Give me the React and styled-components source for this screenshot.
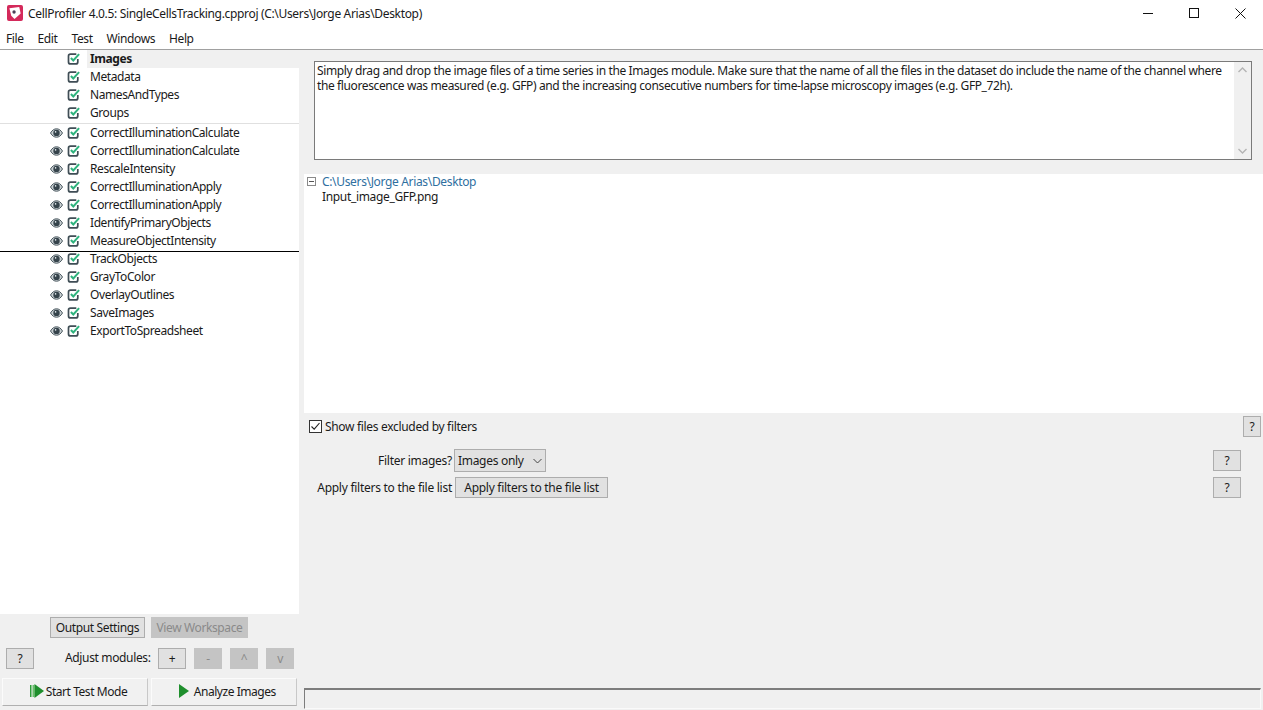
import React from 'react';
import styled, {createGlobalStyle} from 'styled-components';

const GlobalStyle = createGlobalStyle`
    html, body {
        margin: 0;
        padding: 0;
        background: #f0f0f0;
        overflow: hidden;
    }
    body {
        font-family: "Noto Sans", "Open Sans", sans-serif;
        font-size: 12px;
        color: #1a1a1a;
    }
`;

const Window = styled.div`
    width: 1263px;
    height: 710px;
    display: flex;
    flex-direction: column;
    overflow: hidden;
`;

const TitleBar = styled.div`
    height: 28px;
    box-sizing: border-box;
    padding: 0 0 2px 7px;
    background: #ffffff;
    display: flex;
    align-items: center;
    gap: 1px;
    flex-shrink: 0;
`;

const TitleText = styled.span`
    margin-left: 4px;
    font-size: 12px;
    letter-spacing: -0.33px;
    white-space: nowrap;
    flex: 1;
`;

const WindowButton = styled.div`
    width: ${(p) => p.$w || 45}px;
    height: 26px;
    display: flex;
    align-items: center;
    justify-content: center;
`;

const MenuBar = styled.div`
    height: 21px;
    background: #ffffff;
    border-bottom: 1px solid #a0a0a0;
    display: flex;
    align-items: center;
    padding-left: 6px;
    gap: 14px;
    flex-shrink: 0;
`;

const MenuItem = styled.span`
    font-size: 12px;
    letter-spacing: -0.4px;
`;

const Main = styled.div`
    flex: 1;
    display: flex;
    min-height: 0;
`;

const LeftPanel = styled.div`
    width: 304px;
    flex-shrink: 0;
    display: flex;
    flex-direction: column;
`;

const ModuleList = styled.div`
    width: 299px;
    height: 564px;
    background: #ffffff;
    flex-shrink: 0;
`;

const ModuleRow = styled.div`
    height: 18px;
    display: flex;
    align-items: center;
    position: relative;
    margin-bottom: ${(p) => p.$gap ? 2 : 0}px;
    &::after {
        content: '';
        display: ${(p) => p.$rule ? 'block' : 'none'};
        position: absolute;
        left: 0;
        right: 0;
        bottom: -2px;
        height: 1px;
        background: ${(p) => p.$rule};
    }
`;

const EyeSlot = styled.div`
    width: 18px;
    margin-left: 47px;
    display: flex;
    justify-content: center;
`;

const CheckSlot = styled.div`
    width: 17px;
    display: flex;
    justify-content: center;
`;

const ModuleName = styled.div`
    margin-left: 5px;
    flex: 1;
    height: 18px;
    line-height: 18px;
    padding-left: 3px;
    font-size: 12px;
    letter-spacing: -0.42px;
    font-weight: ${(p) => p.$active ? 700 : 400};
    background: ${(p) => p.$active ? '#f0f0f0' : 'transparent'};
`;

const OutputRow = styled.div`
    display: flex;
    gap: 6px;
    padding: 3px 0 0 50px;
`;

const Button = styled.div`
    box-sizing: border-box;
    width: ${(p) => p.$w}px;
    height: ${(p) => p.$h || 21}px;
    display: flex;
    align-items: center;
    justify-content: center;
    flex-shrink: 0;
    background: ${(p) => p.$disabled ? '#c4c4c4' : '#e1e1e1'};
    border: 1px solid ${(p) => p.$disabled ? '#c4c4c4' : '#adadad'};
    color: ${(p) => p.$disabled ? '#8a8a8a' : '#1a1a1a'};
    font-size: 12px;
    letter-spacing: -0.38px;
    white-space: nowrap;
`;

const AdjustRow = styled.div`
    display: flex;
    align-items: center;
    padding: 10px 0 0 6px;
`;

const AdjustLabel = styled.span`
    margin-left: 31px;
    margin-right: 7px;
    width: 86px;
    letter-spacing: -0.35px;
    white-space: nowrap;
    margin-top: -2px;
`;

const AdjustButtons = styled.div`
    display: flex;
    gap: 8px;
`;

const RunRow = styled.div`
    display: flex;
    gap: 3px;
    padding: 9px 0 0 2px;
`;

const RunButton = styled.div`
    box-sizing: border-box;
    width: 146px;
    height: 28px;
    padding: 0 0 2px 7px;
    background: #f1f1f1;
    border-top: 1px solid #fbfbfb;
    border-left: 1px solid #fbfbfb;
    border-right: 1px solid #c8c8c8;
    border-bottom: 1px solid #b0b0b0;
    display: flex;
    align-items: center;
    justify-content: center;
    gap: 2px;
    font-size: 12px;
    letter-spacing: -0.45px;
`;

const RightPanel = styled.div`
    flex: 1;
    display: flex;
    flex-direction: column;
    min-width: 0;
`;

const HelpArea = styled.div`
    padding: 11px 11px 14px 10px;
    flex-shrink: 0;
`;

const HelpBox = styled.div`
    box-sizing: border-box;
    height: 99px;
    background: #ffffff;
    border: 1px solid #7a7a7a;
    display: flex;
`;

const HelpText = styled.div`
    flex: 1;
    padding: 1px 2px;
    font-size: 12px;
    line-height: 15px;
    letter-spacing: -0.38px;
`;

const HelpScroll = styled.div`
    width: 17px;
    background: #f0f0f0;
    display: flex;
    flex-direction: column;
    justify-content: space-between;
    align-items: center;
    padding: 5px 0;
    box-sizing: border-box;
`;

const FileList = styled.div`
    height: 239px;
    background: #ffffff;
    box-sizing: border-box;
    flex-shrink: 0;
`;

const FileRow = styled.div`
    height: 15px;
    line-height: 15px;
    display: flex;
    align-items: center;
    padding-left: 18px;
    letter-spacing: -0.34px;
    color: ${(p) => p.$folder ? '#2f6f9f' : '#1a1a1a'};
`;

const Collapse = styled.div`
    box-sizing: border-box;
    width: 9px;
    height: 9px;
    border: 1px solid #8a8a8a;
    margin-left: -15px;
    margin-right: 6px;
    display: flex;
    align-items: center;
    justify-content: center;
    &::after {
        content: '';
        width: 5px;
        height: 1px;
        background: #555555;
    }
`;

const ExcludedRow = styled.div`
    height: 23px;
    margin-top: 2px;
    display: flex;
    align-items: center;
    padding: 0 2px 0 5px;
    letter-spacing: -0.32px;
`;

const CheckBox = styled.div`
    box-sizing: border-box;
    width: 13px;
    height: 13px;
    border: 1px solid #333333;
    background: #ffffff;
    margin-right: 3px;
    display: flex;
    align-items: center;
    justify-content: center;
`;

const Spacer = styled.div`
    flex: 1;
`;

const SettingRow = styled.div`
    height: 23px;
    margin-top: ${(p) => p.$top}px;
    display: flex;
    align-items: center;
    padding-right: 22px;
`;

const SettingLabel = styled.span`
    width: 148px;
    text-align: right;
    margin-right: 3px;
    white-space: nowrap;
    letter-spacing: -0.27px;
`;

const SelectBox = styled(Button)`
    justify-content: flex-start;
    padding: 0 3px;
    gap: 9px;
    margin-left: -1px;
    letter-spacing: -0.3px;
`;

const ApplyButton = styled(Button)`
    letter-spacing: -0.28px;
`;

const StatusArea = styled.div`
    margin-top: auto;
    height: 21px;
    margin-bottom: 1px;
    border-top: 2px solid #7d7d7d;
    border-left: 1px solid #7d7d7d;
    border-right: 1px solid #fafafa;
    border-bottom: 1px solid #fafafa;
    margin-right: 2px;
    box-sizing: border-box;
`;

const EyeIcon = () => (
    <svg width="13" height="10" viewBox="0 0 13 10">
        <path d="M0.5 5C2.3 2 4.2 0.8 6.5 0.8S10.7 2 12.5 5C10.7 8 8.8 9.2 6.5 9.2S2.3 8 0.5 5Z" fill="#c8cfd2" stroke="#4b5960" strokeWidth="1" />
        <circle cx="6.5" cy="4.9" r="3.2" fill="#35434b" />
        <circle cx="5.6" cy="3.9" r="0.8" fill="#e8eef0" />
    </svg>
);

const ModuleCheck = () => (
    <svg width="13" height="13" viewBox="-0.5 0.5 13 13">
        <path d="M10.3 6.5V9.4C10.3 10.6 9.5 11.4 8.3 11.4H3C1.8 11.4 1 10.6 1 9.4V3.6C1 2.4 1.8 1.6 3 1.6H8.8" fill="none" stroke="#3f4d55" strokeWidth="1.7" />
        <path d="M3.4 5.5L5.8 8L11.6 1.6" fill="none" stroke="#2fb37e" strokeWidth="2" />
    </svg>
);

const Logo = () => (
    <svg width="16" height="16" viewBox="0 0 17 17">
        <rect x="0" y="0" width="17" height="17" rx="2" fill="#d42a5b" />
        <path d="M2.5 3.5L13 2L14.5 9L8 15L4.5 11.5Z" fill="#ffffff" />
        <circle cx="7.5" cy="7.5" r="1.8" fill="#4a4058" />
    </svg>
);

const Chevron = ({up}) => (
    <svg width="9" height="6" viewBox="0 0 9 6">
        <path d={up ? 'M0.5 5L4.5 1L8.5 5' : 'M0.5 1L4.5 5L8.5 1'} fill="none" stroke="#b4b4b4" strokeWidth="1.4" />
    </svg>
);

const PlayIcon = ({bar}) => (
    <svg width={bar ? 14 : 10} height="14" viewBox={bar ? '0 0 14 14' : '0 0 10 14'}>
        {bar && <rect x="0" y="1" width="1.5" height="12" fill="#2d9e3a" />}
        {bar && <rect x="2.5" y="1" width="2" height="12" fill="#6cbf6e" />}
        <path d={bar ? 'M4.5 0L14 7L4.5 14Z' : 'M0 0L10 7L0 14Z'} fill="#1f8f2d" />
    </svg>
);

const modules = [
    {name: 'Images', active: true},
    {name: 'Metadata'},
    {name: 'NamesAndTypes'},
    {name: 'Groups', rule: '#e0e0e0', gap: true},
    {name: 'CorrectIlluminationCalculate', eye: true},
    {name: 'CorrectIlluminationCalculate', eye: true},
    {name: 'RescaleIntensity', eye: true},
    {name: 'CorrectIlluminationApply', eye: true},
    {name: 'CorrectIlluminationApply', eye: true},
    {name: 'IdentifyPrimaryObjects', eye: true},
    {name: 'MeasureObjectIntensity', eye: true, rule: '#000000'},
    {name: 'TrackObjects', eye: true},
    {name: 'GrayToColor', eye: true},
    {name: 'OverlayOutlines', eye: true},
    {name: 'SaveImages', eye: true},
    {name: 'ExportToSpreadsheet', eye: true},
];

const App = () => {
    return (
        <Window>
            <GlobalStyle />
            <TitleBar>
                <Logo />
                <TitleText>CellProfiler 4.0.5: SingleCellsTracking.cpproj (C:\Users\Jorge Arias\Desktop)</TitleText>
                <WindowButton>
                    <svg width="10" height="10" viewBox="0 0 10 10"><path d="M0 5.5H10" stroke="#111111" /></svg>
                </WindowButton>
                <WindowButton>
                    <svg width="10" height="10" viewBox="0 0 10 10"><rect x="0.5" y="0.5" width="9" height="9" fill="none" stroke="#111111" /></svg>
                </WindowButton>
                <WindowButton $w={46}>
                    <svg width="11" height="11" viewBox="0 0 11 11"><path d="M0.5 0.5L10.5 10.5M10.5 0.5L0.5 10.5" stroke="#111111" /></svg>
                </WindowButton>
            </TitleBar>
            <MenuBar>
                <MenuItem>File</MenuItem>
                <MenuItem>Edit</MenuItem>
                <MenuItem>Test</MenuItem>
                <MenuItem>Windows</MenuItem>
                <MenuItem>Help</MenuItem>
            </MenuBar>
            <Main>
                <LeftPanel>
                    <ModuleList>
                        {modules.map((m, i) => (
                            <ModuleRow key={i} $rule={m.rule} $gap={m.gap}>
                                <EyeSlot>{m.eye && <EyeIcon />}</EyeSlot>
                                <CheckSlot><ModuleCheck /></CheckSlot>
                                <ModuleName $active={m.active}>{m.name}</ModuleName>
                            </ModuleRow>
                        ))}
                    </ModuleList>
                    <OutputRow>
                        <Button $w={95}>Output Settings</Button>
                        <Button $w={97} $disabled>View Workspace</Button>
                    </OutputRow>
                    <AdjustRow>
                        <Button $w={28}>?</Button>
                        <AdjustLabel>Adjust modules:</AdjustLabel>
                        <AdjustButtons>
                            <Button $w={28}>+</Button>
                            <Button $w={28} $disabled>-</Button>
                            <Button $w={28} $disabled>^</Button>
                            <Button $w={28} $disabled>v</Button>
                        </AdjustButtons>
                    </AdjustRow>
                    <RunRow>
                        <RunButton><PlayIcon bar />Start Test Mode</RunButton>
                        <RunButton><PlayIcon />&nbsp;Analyze Images</RunButton>
                    </RunRow>
                </LeftPanel>
                <RightPanel>
                    <HelpArea>
                        <HelpBox>
                            <HelpText>
                                Simply drag and drop the image files of a time series in the Images module. Make sure that the name of all the files in the dataset do include the name of the channel where the fluorescence was measured (e.g. GFP) and the increasing consecutive numbers for time-lapse microscopy images (e.g. GFP_72h).
                            </HelpText>
                            <HelpScroll>
                                <Chevron up />
                                <Chevron />
                            </HelpScroll>
                        </HelpBox>
                    </HelpArea>
                    <FileList>
                        <FileRow $folder><Collapse />C:\Users\Jorge Arias\Desktop</FileRow>
                        <FileRow>Input_image_GFP.png</FileRow>
                    </FileList>
                    <ExcludedRow>
                        <CheckBox>
                            <svg width="11" height="11" viewBox="0 0 11 11"><path d="M1.5 5.5L4.2 8.2L9.5 2" fill="none" stroke="#222222" strokeWidth="1.1" /></svg>
                        </CheckBox>
                        Show files excluded by filters
                        <Spacer />
                        <Button $w={18} $h={21}>?</Button>
                    </ExcludedRow>
                    <SettingRow $top={11}>
                        <SettingLabel>Filter images?</SettingLabel>
                        <SelectBox $w={92} $h={23}>
                            Images only
                            <svg width="9" height="6" viewBox="0 0 9 6"><path d="M0.5 1L4.5 5L8.5 1" fill="none" stroke="#444444" /></svg>
                        </SelectBox>
                        <Spacer />
                        <Button $w={28} $h={21}>?</Button>
                    </SettingRow>
                    <SettingRow $top={4}>
                        <SettingLabel>Apply filters to the file list</SettingLabel>
                        <ApplyButton $w={153} $h={21}>Apply filters to the file list</ApplyButton>
                        <Spacer />
                        <Button $w={28} $h={21}>?</Button>
                    </SettingRow>
                    <StatusArea />
                </RightPanel>
            </Main>
        </Window>
    );
};

export default App;
